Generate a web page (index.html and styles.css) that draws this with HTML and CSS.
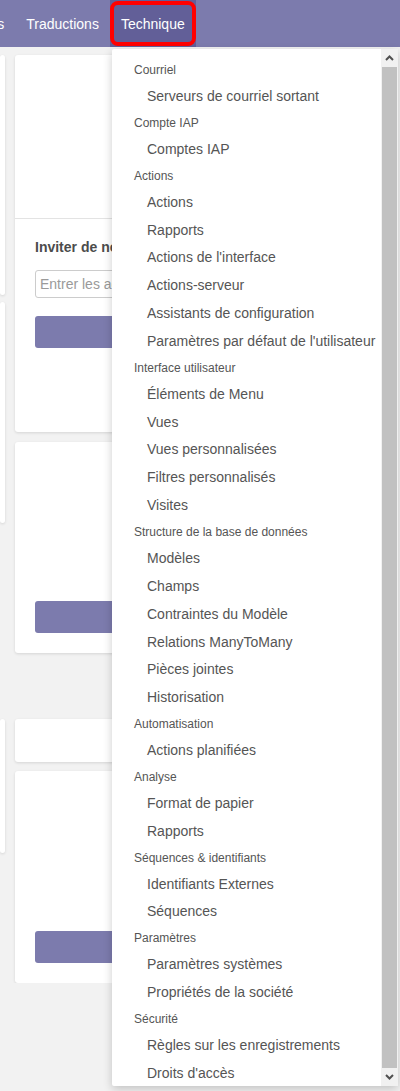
FILE: index.html
```html
<!DOCTYPE html>
<html lang="fr">
<head>
    <meta charset="UTF-8">
    <meta name="viewport" content="width=device-width, initial-scale=1.0">
    <title>Paramètres - Technique</title>
    <link rel="stylesheet" href="styles.css">
</head>
<body>

<header class="navbar">
    <ul class="nav-menu">
        <li class="nav-item">Utilisateurs</li>
        <li class="nav-item">Traductions</li>
        <li class="nav-item active">Technique</li>
    </ul>
</header>

<main class="content">
    <div class="col col-side">
        <div class="card side-a"></div>
        <div class="card side-b"></div>
        <div class="card side-c"></div>
    </div>

    <div class="col col-main">
        <div class="card invite-card">
            <div class="card-top"></div>
            <div class="card-body">
                <h3 class="card-title">Inviter de nouveaux utilisateurs</h3>
                <input class="field" type="text" placeholder="Entrer les adresses e-mail">
                <div class="btn"></div>
            </div>
        </div>
        <div class="card box-card first-box">
            <div class="btn"></div>
        </div>
        <div class="card small-card"></div>
        <div class="card box-card last-box">
            <div class="btn"></div>
        </div>
    </div>
</main>

<div class="dropdown">
    <div class="dd-list">
        <div class="dd-header">Courriel</div>
        <div class="dd-item">Serveurs de courriel sortant</div>

        <div class="dd-header">Compte IAP</div>
        <div class="dd-item">Comptes IAP</div>

        <div class="dd-header">Actions</div>
        <div class="dd-item">Actions</div>
        <div class="dd-item">Rapports</div>
        <div class="dd-item">Actions de l'interface</div>
        <div class="dd-item">Actions-serveur</div>
        <div class="dd-item">Assistants de configuration</div>
        <div class="dd-item">Paramètres par défaut de l'utilisateur</div>

        <div class="dd-header">Interface utilisateur</div>
        <div class="dd-item">Éléments de Menu</div>
        <div class="dd-item">Vues</div>
        <div class="dd-item">Vues personnalisées</div>
        <div class="dd-item">Filtres personnalisés</div>
        <div class="dd-item">Visites</div>

        <div class="dd-header">Structure de la base de données</div>
        <div class="dd-item">Modèles</div>
        <div class="dd-item">Champs</div>
        <div class="dd-item">Contraintes du Modèle</div>
        <div class="dd-item">Relations ManyToMany</div>
        <div class="dd-item">Pièces jointes</div>
        <div class="dd-item">Historisation</div>

        <div class="dd-header">Automatisation</div>
        <div class="dd-item">Actions planifiées</div>

        <div class="dd-header">Analyse</div>
        <div class="dd-item">Format de papier</div>
        <div class="dd-item">Rapports</div>

        <div class="dd-header">Séquences &amp; identifiants</div>
        <div class="dd-item">Identifiants Externes</div>
        <div class="dd-item">Séquences</div>

        <div class="dd-header">Paramètres</div>
        <div class="dd-item">Paramètres systèmes</div>
        <div class="dd-item">Propriétés de la société</div>

        <div class="dd-header">Sécurité</div>
        <div class="dd-item">Règles sur les enregistrements</div>
        <div class="dd-item">Droits d'accès</div>
    </div>

    <div class="scrollbar">
        <div class="sb-btn">
            <svg width="9" height="6" viewBox="0 0 9 6"><path d="M1 5 L4.5 1.5 L8 5" fill="none" stroke="#505050" stroke-width="2"/></svg>
        </div>
        <div class="sb-thumb"></div>
        <div class="sb-btn">
            <svg width="9" height="6" viewBox="0 0 9 6"><path d="M1 1 L4.5 4.5 L8 1" fill="none" stroke="#505050" stroke-width="2"/></svg>
        </div>
    </div>
</div>

</body>
</html>
```

FILE: styles.css
```css
body {
    margin: 0;
    font-family: "Liberation Sans", Arial, sans-serif;
    background-color: #f2f2f2;
    overflow: hidden;
}

/* top bar */

.navbar {
    height: 47px;
    background-color: #7c7bad;
    overflow: hidden;
}

.nav-menu {
    display: flex;
    list-style: none;
    margin: 0 0 0 -76px;
    padding: 0;
}

.nav-item {
    padding: 2px 11px 0;
    line-height: 45px;
    font-size: 14px;
    color: #fff;
    white-space: nowrap;
}

.nav-item.active {
    position: relative;
    background-color: #625f98;
}

.nav-item.active::after {
    content: "";
    position: absolute;
    left: 0;
    right: 0;
    top: 1px;
    bottom: 1px;
    border: 4px solid #f00;
    border-radius: 8px;
}

/* page behind the menu */

.content {
    display: flex;
    gap: 10px;
    padding-top: 8px;
}

.col-side {
    width: 5px;
}

.col-main {
    width: 375px;
}

.card {
    background-color: #fff;
    border-radius: 3px;
    box-shadow: 0 1px 3px rgba(0, 0, 0, 0.12);
    box-sizing: border-box;
}

.side-a {
    height: 240px;
}

.side-b {
    height: 221px;
    margin-top: 7px;
}

.side-c {
    height: 134px;
    margin-top: 196px;
}

.invite-card {
    height: 377px;
}

.card-top {
    height: 163px;
    border-bottom: 1px solid #e3e3e3;
}

.card-body {
    padding: 20px;
}

.card-title {
    margin: 0;
    font-size: 14px;
    line-height: 17px;
    font-weight: bold;
    color: #4c4c4c;
}

.field {
    display: block;
    width: 100%;
    height: 28px;
    margin-top: 14px;
    padding: 0 4px;
    border: 1px solid #ccc;
    border-radius: 3px;
    box-sizing: border-box;
    font-family: inherit;
    font-size: 14px;
}

.field::placeholder {
    color: #9a9a9a;
}

.btn {
    height: 32px;
    margin-top: 18px;
    background-color: #7c7bad;
    border-radius: 3px;
}

.box-card {
    display: flex;
    flex-direction: column;
    justify-content: flex-end;
    padding: 20px;
}

.box-card .btn {
    margin-top: 0;
}

.first-box {
    height: 211px;
    margin-top: 10px;
}

.small-card {
    height: 43px;
    margin-top: 66px;
}

.last-box {
    height: 212px;
    margin-top: 9px;
}

/* dropdown menu */

.dropdown {
    position: absolute;
    top: 49px;
    left: 112px;
    width: 286px;
    height: 1037px;
    display: flex;
    background-color: #fff;
    border-radius: 2px;
    box-shadow: 0 3px 10px rgba(0, 0, 0, 0.2);
}

.dd-list {
    flex: 1;
    padding-top: 9px;
    overflow: hidden;
}

.dd-header {
    padding-left: 22px;
    font-size: 12px;
    line-height: 25px;
    color: #555;
    white-space: nowrap;
}

.dd-item {
    padding-left: 35px;
    font-size: 14px;
    line-height: 27.85px;
    color: #555;
    white-space: nowrap;
}

.scrollbar {
    width: 17px;
    display: flex;
    flex-direction: column;
    background-color: #f1f1f1;
}

.sb-btn {
    height: 18px;
    display: flex;
    align-items: center;
    justify-content: center;
}

.sb-thumb {
    flex: 1;
    margin: 0 1px;
    background-color: #c1c1c1;
}
```
